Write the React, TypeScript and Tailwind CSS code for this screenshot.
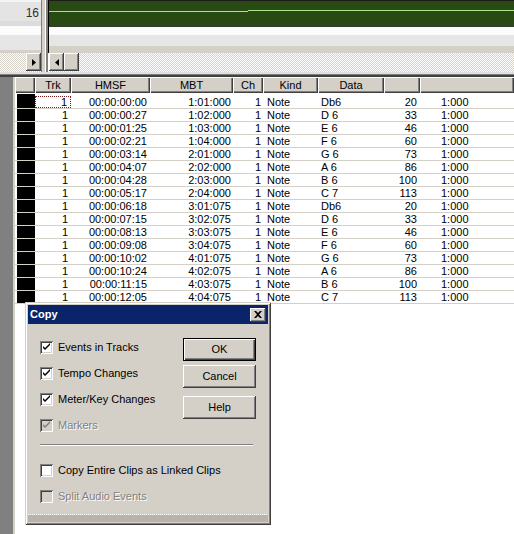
import React from "react";

type Row = [string, string, string, number];

const rows: Row[] = [
  ["00:00:00:00", "1:01:000", "Db6", 20],
  ["00:00:00:27", "1:02:000", "D 6", 33],
  ["00:00:01:25", "1:03:000", "E 6", 46],
  ["00:00:02:21", "1:04:000", "F 6", 60],
  ["00:00:03:14", "2:01:000", "G 6", 73],
  ["00:00:04:07", "2:02:000", "A 6", 86],
  ["00:00:04:28", "2:03:000", "B 6", 100],
  ["00:00:05:17", "2:04:000", "C 7", 113],
  ["00:00:06:18", "3:01:075", "Db6", 20],
  ["00:00:07:15", "3:02:075", "D 6", 33],
  ["00:00:08:13", "3:03:075", "E 6", 46],
  ["00:00:09:08", "3:04:075", "F 6", 60],
  ["00:00:10:02", "4:01:075", "G 6", 73],
  ["00:00:10:24", "4:02:075", "A 6", 86],
  ["00:00:11:15", "4:03:075", "B 6", 100],
  ["00:00:12:05", "4:04:075", "C 7", 113],
];

// classic 3D bevels
const raised =
  "shadow-[inset_-1px_-1px_#404040,inset_1px_1px_#ffffff,inset_-2px_-2px_#808080]";
const headerBevel =
  "shadow-[inset_1px_1px_#ffffff,inset_-1px_-1px_#404040,inset_-2px_-2px_#808080]";
const dither =
  "bg-[image:repeating-conic-gradient(#d4d0c8_0_25%,#ffffff_0_50%)] bg-[length:2px_2px]";

function Arrow({ dir }: { dir: "left" | "right" }) {
  return (
    <svg width="4" height="7" viewBox="0 0 4 7">
      {dir === "right" ? <polygon points="0,0 4,3.5 0,7" fill="#000" /> : <polygon points="4,0 0,3.5 4,7" fill="#000" />}
    </svg>
  );
}

function ScrollBtn({ children }: { children?: React.ReactNode }) {
  return (
    <div className={`w-[15px] h-[18px] bg-[#d4d0c8] ${raised} flex items-center justify-center`}>
      {children}
    </div>
  );
}

function CheckBox({ checked, disabled }: { checked: boolean; disabled?: boolean }) {
  return (
    <div
      className={`w-[13px] h-[13px] shrink-0 flex items-center justify-center shadow-[inset_1px_1px_#808080,inset_-1px_-1px_#ffffff,inset_2px_2px_#404040,inset_-2px_-2px_#d4d0c8] ${
        disabled ? "bg-[#d4d0c8]" : "bg-white"
      }`}
    >
      {checked && (
        <svg width="13" height="13" viewBox="0 0 13 13">
          <path d="M3 5 L3 7 L5 9 L10 4 L10 2 L5 7 Z" fill={disabled ? "#808080" : "#000"} />
        </svg>
      )}
    </div>
  );
}

function CheckRow({ label, checked, disabled }: { label: string; checked: boolean; disabled?: boolean }) {
  return (
    <div className="h-[26px] flex items-center gap-[5px]">
      <CheckBox checked={checked} disabled={disabled} />
      <span
        className={
          disabled ? "text-[#808080] [text-shadow:1px_1px_0_#ffffff]" : "text-black"
        }
      >
        {label}
      </span>
    </div>
  );
}

function Button({ label, isDefault, className = "" }: { label: string; isDefault?: boolean; className?: string }) {
  return (
    <div
      className={`h-[23px] flex items-center justify-center bg-[#d4d0c8] ${
        isDefault
          ? "shadow-[inset_1px_1px_#000,inset_-1px_-1px_#000,inset_2px_2px_#ffffff,inset_-2px_-2px_#404040,inset_-3px_-3px_#808080]"
          : raised
      } ${className}`}
    >
      {label}
    </div>
  );
}

export default function App() {
  return (
    <div className="relative w-[514px] h-[534px] overflow-hidden bg-white font-['Liberation_Sans',Arial,sans-serif] text-[11px] text-black flex flex-col">
      {/* Track pane */}
      <div className="flex h-[72px] shrink-0">
        <div className="w-[41px] flex flex-col">
          <div className="h-[2px] bg-[#f4f4f4]" />
          <div className="h-[19px] bg-[#e4e4e4] text-[12px] text-[#303030] text-right pr-[2px] leading-[22px]">16</div>
          <div className="h-[5px] bg-[#dcdcdc]" />
          <div className="h-[9px] bg-[#fcfcfc]" />
          <div className="h-[15px] bg-[#e6e6e6]" />
          <div className="h-[3px] bg-[#d4d0c8]" />
          <div className={`h-[19px] ${dither} flex justify-end`}>
            <ScrollBtn>
              <Arrow dir="right" />
            </ScrollBtn>
          </div>
        </div>
        <div className="w-[8px] flex">
          <div className="w-px bg-[#808080]" />
          <div className="w-[3px] bg-[#d4d0c8]" />
          <div className="w-px bg-white" />
          <div className="w-[2px] bg-[#808080]" />
          <div className="w-px h-[53px] bg-black" />
        </div>
        <div className="flex-1 flex flex-col">
          <div className="h-[27px] border-t border-[#1c1c1c] bg-[#2a4a14] border-b-2 border-b-[#3a3a3a]">
            <svg width="465" height="24" className="block">
              <path d="M0 10.5 H199 M199 9.5 H465" stroke="#a6e48e" strokeWidth="1" fill="none" />
            </svg>
          </div>
          <div className="h-[8px] bg-[#fcfcfc]" />
          <div className="h-[11px] bg-[#e6e6e6]" />
          <div className="h-[7px] bg-[#d4d0c8]" />
          <div className={`h-[19px] ${dither} flex`}>
            <ScrollBtn>
              <Arrow dir="left" />
            </ScrollBtn>
            <ScrollBtn />
          </div>
        </div>
      </div>
      <div className="h-[2px] bg-[#e0e0e0] shrink-0" />
      <div className="h-px bg-[#808080] shrink-0" />
      <div className="h-[2px] bg-[#404040] shrink-0" />

      {/* Event list */}
      <div className="flex flex-1">
        <div className="w-[13px] bg-[#808080]" />
        <div className="w-[2px] bg-[#d4d0c8]" />
        <div className="flex-1 flex flex-col bg-white">
          <div className="flex h-[16px] bg-[#d4d0c8] leading-[16px] text-center">
            <div className={`w-[20px] ${headerBevel}`} />
            <div className={`w-[36px] ${headerBevel}`}>Trk</div>
            <div className={`w-[79px] ${headerBevel}`}>HMSF</div>
            <div className={`w-[83px] ${headerBevel}`}>MBT</div>
            <div className={`w-[30px] ${headerBevel}`}>Ch</div>
            <div className={`w-[55px] ${headerBevel}`}>Kind</div>
            <div className={`w-[66px] ${headerBevel}`}>Data</div>
            <div className={`w-[36px] ${headerBevel}`} />
            <div className={`flex-1 ${headerBevel}`} />
          </div>
          <div className="flex h-[3px]">
            <div className="w-[20px] pl-[2px] pt-px">
              <div className="h-[2px] bg-black" />
            </div>
          </div>
          {rows.map(([hmsf, mbt, data, vel], i) => (
            <div key={i} className="flex h-[13px] leading-[12px] border-b border-[#d4d0c8] whitespace-pre">
              <div className="w-[20px] pl-[2px]">
                <div className="h-[12px] bg-black" />
              </div>
              <div
                className={`w-[36px] text-right pr-[3px] ${
                  i === 0 ? "border border-dotted border-[#7a1c1c] pr-[2px] leading-[10px]" : ""
                }`}
              >
                1
              </div>
              <div className="w-[79px] text-right pr-[3px]">{hmsf}</div>
              <div className="w-[83px] text-right pr-[2px]">{mbt}</div>
              <div className="w-[30px] text-right pr-[2px]">1</div>
              <div className="w-[55px] pl-[4px]">Note</div>
              <div className="w-[66px] pl-[3px]">{data}</div>
              <div className="w-[36px] text-right pr-[3px]">{vel}</div>
              <div className="flex-1 pl-[21px]">1:000</div>
            </div>
          ))}
        </div>
      </div>

      {/* Copy dialog */}
      <div className="absolute left-[25px] top-[302px] w-[246px] h-[223px] bg-[#d4d0c8] p-[3px] flex flex-col shadow-[inset_1px_1px_#d4d0c8,inset_-1px_-1px_#404040,inset_2px_2px_#ffffff,inset_-2px_-2px_#808080]">
        <div className="h-[19px] bg-[#0a246a] flex items-center justify-between pl-[2px] pr-[2px]">
          <span className="text-white font-bold">Copy</span>
          <div className={`w-[16px] h-[14px] bg-[#d4d0c8] ${raised} flex items-center justify-center`}>
            <svg width="8" height="7" viewBox="0 0 8 7">
              <path d="M0 0 H2 L4 2 L6 0 H8 L5 3.5 L8 7 H6 L4 5 L2 7 H0 L3 3.5 Z" fill="#000" />
            </svg>
          </div>
        </div>
        <div className="flex-1 flex flex-col">
          <div className="flex">
            <div className="flex-1 pl-[12px] pt-[10px]">
              <CheckRow label="Events in Tracks" checked />
              <CheckRow label="Tempo Changes" checked />
              <CheckRow label="Meter/Key Changes" checked />
              <CheckRow label="Markers" checked disabled />
            </div>
            <div className="w-[73px] mr-[12px] pt-[14px] flex flex-col">
              <Button label="OK" isDefault />
              <Button label="Cancel" className="mt-[4px]" />
              <Button label="Help" className="mt-[8px]" />
            </div>
          </div>
          <div className="ml-[12px] w-[213px] mt-[6px] border-t border-[#808080] border-b border-b-white" />
          <div className="pl-[12px] mt-[11px]">
            <CheckRow label="Copy Entire Clips as Linked Clips" checked={false} />
            <CheckRow label="Split Audio Events" checked={false} disabled />
          </div>
          <div className="flex-1" />
          <div className="h-[8px] flex flex-col">
            <div className={`h-px ${dither}`} />
            <div className="flex-1 bg-[#b8b4ac]" />
          </div>
        </div>
      </div>
    </div>
  );
}
